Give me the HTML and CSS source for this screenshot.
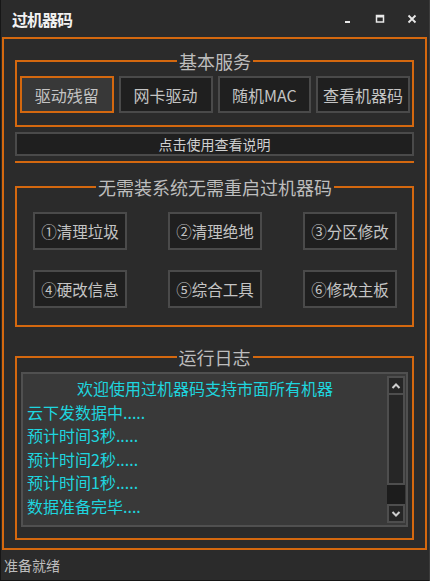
FILE: index.html
```html
<!DOCTYPE html>
<html lang="zh-CN">
<head>
    <meta charset="UTF-8">
    <meta name="viewport" content="width=device-width, initial-scale=1.0">
    <title>过机器码</title>
    <link rel="stylesheet" href="styles.css">
</head>
<body>
    <div class="window">
        <header class="titlebar">
            <span class="title">过机器码</span>
            <div class="controls">
                <svg width="10" height="10" viewBox="0 0 10 10"><rect x="2" y="7" width="5" height="2" fill="#e8e8e8"/></svg>
                <svg width="10" height="10" viewBox="0 0 10 10"><rect x="1.5" y="1.5" width="7" height="6.5" fill="none" stroke="#e8e8e8" stroke-width="1.5"/><rect x="1" y="1" width="8" height="2.5" fill="#e8e8e8"/></svg>
                <svg width="10" height="10" viewBox="0 0 10 10"><path d="M1.5 1.5 L8.5 8.5 M8.5 1.5 L1.5 8.5" stroke="#e8e8e8" stroke-width="1.8"/></svg>
            </div>
        </header>

        <div class="main">
            <fieldset class="group group-basic">
                <legend>基本服务</legend>
                <div class="btn-row">
                    <button class="btn active">驱动残留</button>
                    <button class="btn">网卡驱动</button>
                    <button class="btn">随机MAC</button>
                    <button class="btn">查看机器码</button>
                </div>
            </fieldset>

            <div class="help-bar">点击使用查看说明</div>
            <div class="divider"></div>

            <fieldset class="group group-tools">
                <legend>无需装系统无需重启过机器码</legend>
                <div class="tool-grid">
                    <button class="btn">①清理垃圾</button>
                    <button class="btn">②清理绝地</button>
                    <button class="btn">③分区修改</button>
                    <button class="btn">④硬改信息</button>
                    <button class="btn">⑤综合工具</button>
                    <button class="btn">⑥修改主板</button>
                </div>
            </fieldset>

            <fieldset class="group group-log">
                <legend>运行日志</legend>
                <div class="log">
                    <div class="log-text">
                        <div class="log-head">欢迎使用过机器码支持市面所有机器</div>
                        <div>云下发数据中.....</div>
                        <div>预计时间3秒.....</div>
                        <div>预计时间2秒.....</div>
                        <div>预计时间1秒.....</div>
                        <div>数据准备完毕....</div>
                    </div>
                    <div class="scrollbar">
                        <div class="sb-btn">
                            <svg width="10" height="8" viewBox="0 0 10 8"><path d="M1.5 6 L5 2.5 L8.5 6" fill="none" stroke="#cfcfcf" stroke-width="2"/></svg>
                        </div>
                        <div class="sb-thumb"></div>
                        <div class="sb-track"></div>
                        <div class="sb-btn">
                            <svg width="10" height="8" viewBox="0 0 10 8"><path d="M1.5 2 L5 5.5 L8.5 2" fill="none" stroke="#cfcfcf" stroke-width="2"/></svg>
                        </div>
                    </div>
                </div>
            </fieldset>
        </div>

        <footer class="status">准备就绪</footer>
    </div>
</body>
</html>
```

FILE: styles.css
```css
body {
    margin: 0;
    padding: 0;
    background-color: #2b2b2b;
    font-family: "Noto Sans CJK SC", "Microsoft YaHei", sans-serif;
    color: #c4c4c4;
}
.window {
    width: 430px;
    height: 581px;
    background-color: #2b2b2b;
    box-sizing: border-box;
    border-left: 1px solid #161616;
    border-right: 1px solid #3c3c3c;
    display: flex;
    flex-direction: column;
}
.titlebar {
    height: 38px;
    display: flex;
    align-items: center;
    justify-content: space-between;
    padding-left: 11px;
    box-sizing: border-box;
}
.title {
    font-size: 16px;
    font-weight: bold;
    color: #f2f2f2;
    letter-spacing: -1px;
}
.controls {
    display: flex;
    gap: 22px;
    padding-right: 12px;
}
.main {
    margin-left: 1px;
    margin-right: 2px;
    border: 2px solid #d4680f;
    padding: 12px 11px 8px 11px;
}
.group {
    margin: 0;
    border: 2px solid #d4680f;
    min-width: 0;
}
.group legend {
    margin: 0 auto;
    padding: 0 2px;
    font-size: 18px;
    line-height: 20px;
    color: #bdbdbd;
}
.group-basic {
    padding: 5px 2px 12px 3px;
}
.btn-row {
    display: grid;
    grid-template-columns: repeat(4, 1fr);
    gap: 5px;
}
.btn {
    font-family: "Noto Sans CJK SC", sans-serif;
    font-size: 16px;
    color: #c4c4c4;
    background-color: #1f1f1f;
    border: 2px solid #4a4a4a;
    height: 37px;
    padding: 0;
    white-space: nowrap;
}
.btn.active {
    background-color: #383838;
    border-color: #d4680f;
}
.help-bar {
    margin-top: 5px;
    height: 24px;
    box-sizing: border-box;
    border: 2px solid #4a4a4a;
    background-color: #1f1f1f;
    font-size: 14px;
    line-height: 20px;
    text-align: center;
    color: #d0d0d0;
}
.divider {
    margin-top: 5px;
    height: 2px;
    background-color: #d4680f;
}
.group-tools {
    margin-top: 14px;
    padding: 15px 15px 17px 16px;
}
.tool-grid {
    display: grid;
    grid-template-columns: repeat(3, 94px);
    justify-content: space-between;
    row-gap: 20px;
}
.tool-grid .btn {
    height: 38px;
    font-size: 15.5px;
}
.group-log {
    margin-top: 20px;
    padding: 5px 4px 11px 4px;
}
.log {
    height: 155px;
    box-sizing: border-box;
    border: 2px solid #505050;
    background-color: #393939;
    display: flex;
}
.log-text {
    flex: 1;
    padding: 3px 4px;
    font-size: 16px;
    line-height: 23.5px;
    color: #1ed5df;
    white-space: nowrap;
}
.log-head {
    text-align: center;
}
.scrollbar {
    width: 18px;
    margin: 2px 1px 2px 0;
    display: flex;
    flex-direction: column;
}
.sb-btn {
    height: 19px;
    box-sizing: border-box;
    border: 2px solid #4e4e4e;
    background-color: #262626;
    display: flex;
    align-items: center;
    justify-content: center;
}
.sb-thumb {
    height: 90px;
    box-sizing: border-box;
    border: 2px solid #4e4e4e;
    border-top: none;
    background-color: #262626;
}
.sb-track {
    flex: 1;
    background-color: #1c1c1c;
}
.status {
    flex: 1;
    padding-left: 3px;
    font-size: 14px;
    line-height: 30px;
    color: #bdbdbd;
    background-color: #2b2b2b;
    border-bottom: 1px solid #161616;
}
```
